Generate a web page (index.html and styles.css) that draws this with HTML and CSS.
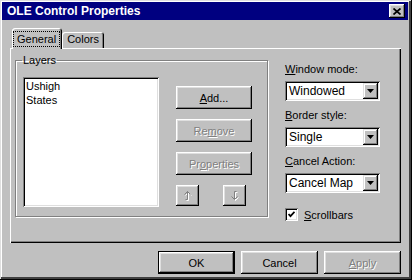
FILE: index.html
```html
<!DOCTYPE html>
<html lang="en">
<head>
  <meta charset="UTF-8" />
  <title>OLE Control Properties</title>
  <link rel="stylesheet" href="styles.css">
</head>
<body>

  <div class="dialog">
    <div class="titlebar">
      <span class="title">OLE Control Properties</span>
      <span class="close-btn">
        <svg width="8" height="7" viewBox="0 0 8 7"><path d="M0.5 0.5l7 6M7.5 0.5l-7 6" stroke="#000" stroke-width="1.7"/></svg>
      </span>
    </div>

    <div class="tabs">
      <div class="tab active"><span class="focus">General</span></div>
      <div class="tab">Colors</div>
    </div>

    <div class="panel">
      <fieldset class="group">
        <legend>Layers</legend>
        <div class="group-body">
          <div class="listbox">
            <div class="item">Ushigh</div>
            <div class="item">States</div>
          </div>
          <div class="layer-buttons">
            <button class="btn"><u>A</u>dd...</button>
            <button class="btn" disabled>Re<u>m</u>ove</button>
            <button class="btn" disabled>Pr<u>o</u>perties</button>
            <div class="arrows">
              <button class="btn small" disabled>
                <svg width="8" height="10" viewBox="0 0 8 10">
                  <path d="M4.5 1.5v8M2.5 9.5h2M1.5 4.5l3-3 3 3" stroke="#fff" fill="none"/>
                  <path d="M3.5 0.5v8M1.5 8.5h2M0.5 3.5l3-3 3 3" stroke="#808080" fill="none"/>
                </svg>
              </button>
              <button class="btn small" disabled>
                <svg width="8" height="10" viewBox="0 0 8 10">
                  <path d="M4.5 1.5v8M4.5 1.5h2M1.5 6.5l3 3 3-3" stroke="#fff" fill="none"/>
                  <path d="M3.5 0.5v8M3.5 0.5h2M0.5 5.5l3 3 3-3" stroke="#808080" fill="none"/>
                </svg>
              </button>
            </div>
          </div>
        </div>
      </fieldset>

      <div class="options">
        <div class="field-label"><u>W</u>indow mode:</div>
        <div class="select">
          <span class="select-value">Windowed</span>
          <span class="drop-btn"><svg width="7" height="4" viewBox="0 0 7 4"><path d="M0 0h7L3.5 4z" fill="#000"/></svg></span>
        </div>
        <div class="field-label"><u>B</u>order style:</div>
        <div class="select">
          <span class="select-value">Single</span>
          <span class="drop-btn"><svg width="7" height="4" viewBox="0 0 7 4"><path d="M0 0h7L3.5 4z" fill="#000"/></svg></span>
        </div>
        <div class="field-label"><u>C</u>ancel Action:</div>
        <div class="select">
          <span class="select-value">Cancel Map</span>
          <span class="drop-btn"><svg width="7" height="4" viewBox="0 0 7 4"><path d="M0 0h7L3.5 4z" fill="#000"/></svg></span>
        </div>
        <label class="check">
          <span class="check-box"><svg width="7" height="7" viewBox="0 0 7 7"><path d="M0.5 3l2 2.2 4-4.4" stroke="#000" stroke-width="1.8" fill="none"/></svg></span>
          <span><u>S</u>crollbars</span>
        </label>
      </div>
    </div>

    <div class="footer">
      <button class="btn default">OK</button>
      <button class="btn">Cancel</button>
      <button class="btn" disabled><u>A</u>pply</button>
    </div>
  </div>

</body>
</html>
```

FILE: styles.css
```css
* {
  box-sizing: border-box;
}

body {
  margin: 0;
  background: #c0c0c0;
  font-family: "Liberation Sans", Arial, sans-serif;
  font-size: 11px;
  color: #000;
}

u {
  text-decoration: underline;
  text-underline-offset: 1px;
}

/* window frame */
.dialog {
  width: 412px;
  height: 280px;
  padding: 2px 4px 3px 2px;
  background: #c0c0c0;
  box-shadow: inset -1px -1px #000, inset 1px 1px #dfdfdf, inset -3px -3px #404040, inset 2px 2px #fff;
  display: flex;
  flex-direction: column;
}

.titlebar {
  height: 18px;
  background: #000080;
  color: #fff;
  display: flex;
  align-items: center;
  justify-content: space-between;
  padding: 0 3px 0 5px;
}

.title {
  font-weight: bold;
  font-size: 12px;
}

.close-btn {
  width: 16px;
  height: 14px;
  background: #c0c0c0;
  display: flex;
  align-items: center;
  justify-content: center;
  box-shadow: inset -1px -1px #000, inset 1px 1px #fff, inset -2px -2px #808080, inset 2px 2px #dfdfdf;
}

/* tabs */
.tabs {
  display: flex;
  align-items: flex-end;
  height: 20px;
  margin: 8px 0 0 10px;
  position: relative;
  z-index: 1;
}

.tab {
  height: 16px;
  padding: 0 5px 0 5px;
  line-height: 15px;
  border-radius: 3px 3px 0 0;
  box-shadow: inset 1px 1px #fff, inset -1px 0 #000, inset -2px 0 #808080;
}

.tab.active {
  height: 21px;
  margin-bottom: -1px;
  padding: 3px 2px 0 1px;
  background: #c0c0c0;
}

.focus {
  display: block;
  padding: 0 3px;
  line-height: 14px;
  border: 1px dotted #000;
}

/* tab page */
.panel {
  margin: 0 7px 0 8px;
  height: 195px;
  display: flex;
  align-items: flex-start;
  padding: 6px 0 0 5px;
  box-shadow: inset 1px 1px #fff, inset -1px -1px #000, inset -2px -2px #808080;
}

.group {
  margin: 0;
  width: 251px;
  padding: 10px 15px 9px 7px;
  border: 1px solid #808080;
  box-shadow: inset 1px 1px #fff, 1px 1px #fff;
}

.group legend {
  padding: 0 1px;
  margin-left: -1px;
  line-height: 13px;
}

.group-body {
  height: 130px;
  display: flex;
  align-items: flex-start;
}

.listbox {
  width: 136px;
  height: 130px;
  padding: 2px;
  background: #fff;
  box-shadow: inset 1px 1px #808080, inset -1px -1px #fff, inset 2px 2px #000, inset -2px -2px #dfdfdf;
}

.item {
  padding: 0 1px;
  line-height: 14px;
}

.layer-buttons {
  width: 76px;
  margin: 9px 0 0 17px;
  display: flex;
  flex-direction: column;
  gap: 10px;
}

.btn {
  height: 23px;
  padding: 0;
  border: none;
  background: #c0c0c0;
  font-family: inherit;
  font-size: 11px;
  color: #000;
  box-shadow: inset -1px -1px #000, inset 1px 1px #fff, inset -2px -2px #808080, inset 2px 2px #dfdfdf;
}

.btn:disabled {
  color: #808080;
  text-shadow: 1px 1px #fff;
}

.arrows {
  display: flex;
  justify-content: space-between;
  padding-right: 6px;
}

.btn.small {
  width: 23px;
  height: 21px;
  display: flex;
  align-items: center;
  justify-content: center;
}

/* right column */
.options {
  width: 95px;
  margin: 9px 0 0 17px;
}

.field-label {
  line-height: 13px;
  margin-bottom: 5px;
}

.select {
  height: 20px;
  margin-bottom: 8px;
  padding: 2px;
  display: flex;
  align-items: center;
  justify-content: space-between;
  background: #fff;
  box-shadow: inset 1px 1px #808080, inset -1px -1px #fff, inset 2px 2px #000, inset -2px -2px #dfdfdf;
}

.select-value {
  padding-left: 2px;
  font-size: 12px;
}

.drop-btn {
  width: 15px;
  height: 16px;
  background: #c0c0c0;
  display: flex;
  align-items: center;
  justify-content: center;
  box-shadow: inset -1px -1px #000, inset 1px 1px #dfdfdf, inset -2px -2px #808080, inset 2px 2px #fff;
}

.check {
  display: flex;
  align-items: center;
  gap: 6px;
  margin-top: 15px;
}

.check-box {
  width: 13px;
  height: 13px;
  background: #fff;
  display: flex;
  align-items: center;
  justify-content: center;
  box-shadow: inset 1px 1px #808080, inset -1px -1px #fff, inset 2px 2px #000, inset -2px -2px #dfdfdf;
}

/* dialog buttons */
.footer {
  display: flex;
  justify-content: flex-end;
  gap: 6px;
  margin: 8px 7px 0 0;
}

.footer .btn {
  width: 77px;
}

.btn.default {
  border: 1px solid #000;
}
```
